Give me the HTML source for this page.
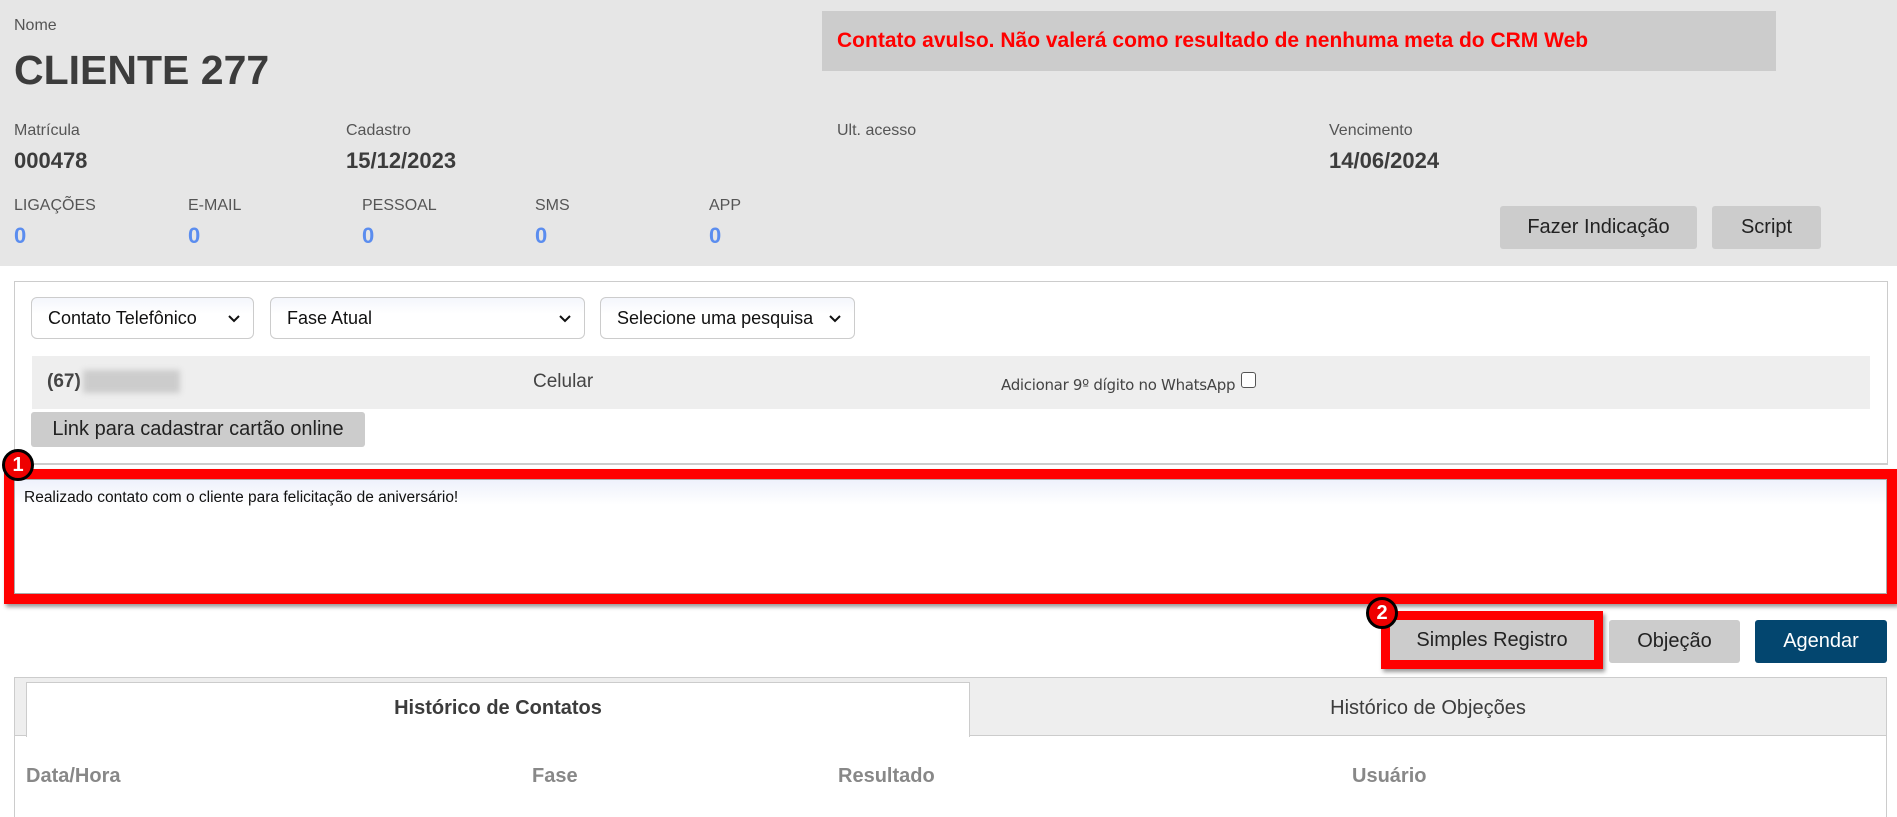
<!DOCTYPE html>
<html><head><meta charset="utf-8"><style>
*{box-sizing:border-box;margin:0;padding:0}
body{width:1897px;height:815px;overflow:hidden;background:#fff;font-family:"Liberation Sans",Arial,sans-serif;position:relative;color:#333}
.a{position:absolute;white-space:nowrap}
.hdr{position:absolute;left:0;top:0;width:1897px;height:266px;background:#e6e6e6}
.lbl{font-size:16px;color:#555}
.val{font-size:22px;font-weight:bold;color:#3c3c3c}
.cnt{font-size:22px;font-weight:bold;color:#5b8def}
.btn{position:absolute;background:#ccc;border-radius:3px;font-size:20px;color:#222;display:flex;align-items:center;justify-content:center}
.sel{position:absolute;top:297px;height:42px;border:1px solid #ccc;border-radius:6px;background:linear-gradient(#f4f6fc,#fff 40%);font-size:18px;color:#111;padding-left:16px;display:flex;align-items:center}
.sel svg{position:absolute;right:12px;top:16px}
.badge{position:absolute;width:32px;height:32px;border-radius:50%;background:#e00;border:3px solid #000;color:#fff;font-weight:bold;font-size:20px;display:flex;align-items:center;justify-content:center}
.th{position:absolute;top:765px;font-size:20px;font-weight:bold;color:#888}
</style></head><body>
<div class="hdr"></div>
<div class="a lbl" style="left:14px;top:17px">Nome</div>
<div class="a" style="left:14px;top:47px;font-size:41px;font-weight:bold;color:#3c3c3c">CLIENTE 277</div>
<div class="a" style="left:822px;top:11px;width:954px;height:60px;background:#ccc"></div>
<div class="a" style="left:837px;top:29px;font-size:21px;font-weight:bold;color:#f00">Contato avulso. Não valerá como resultado de nenhuma meta do CRM Web</div>

<div class="a lbl" style="left:14px;top:122px">Matrícula</div>
<div class="a val" style="left:14px;top:148px">000478</div>
<div class="a lbl" style="left:346px;top:122px">Cadastro</div>
<div class="a val" style="left:346px;top:148px">15/12/2023</div>
<div class="a lbl" style="left:837px;top:122px">Ult. acesso</div>
<div class="a lbl" style="left:1329px;top:122px">Vencimento</div>
<div class="a val" style="left:1329px;top:148px">14/06/2024</div>

<div class="a lbl" style="left:14px;top:197px">LIGAÇÕES</div>
<div class="a cnt" style="left:14px;top:223px">0</div>
<div class="a lbl" style="left:188px;top:197px">E-MAIL</div>
<div class="a cnt" style="left:188px;top:223px">0</div>
<div class="a lbl" style="left:362px;top:197px">PESSOAL</div>
<div class="a cnt" style="left:362px;top:223px">0</div>
<div class="a lbl" style="left:535px;top:197px">SMS</div>
<div class="a cnt" style="left:535px;top:223px">0</div>
<div class="a lbl" style="left:709px;top:197px">APP</div>
<div class="a cnt" style="left:709px;top:223px">0</div>

<div class="btn" style="left:1500px;top:206px;width:197px;height:43px">Fazer Indicação</div>
<div class="btn" style="left:1712px;top:206px;width:109px;height:43px">Script</div>

<div class="a" style="left:14px;top:281px;width:1874px;height:184px;border:1px solid #ccc;border-bottom-width:2px"></div>
<div class="sel" style="left:31px;width:223px">Contato Telefônico<svg width="14" height="10" viewBox="0 0 14 10"><path d="M2 2l5 5 5-5" stroke="#111" stroke-width="2" fill="none"/></svg></div>
<div class="sel" style="left:270px;width:315px">Fase Atual<svg width="14" height="10" viewBox="0 0 14 10"><path d="M2 2l5 5 5-5" stroke="#111" stroke-width="2" fill="none"/></svg></div>
<div class="sel" style="left:600px;width:255px">Selecione uma pesquisa<svg width="14" height="10" viewBox="0 0 14 10"><path d="M2 2l5 5 5-5" stroke="#111" stroke-width="2" fill="none"/></svg></div>

<div class="a" style="left:32px;top:356px;width:1838px;height:53px;background:#eee"></div>
<div class="a" style="left:47px;top:371px;font-size:19px;font-weight:bold;color:#444">(67)</div>
<div class="a" style="left:83px;top:370px;width:97px;height:23px;background:#ccc;filter:blur(3px)"></div>
<div class="a" style="left:533px;top:371px;font-size:19px;color:#444">Celular</div>
<div class="a" style="left:1001px;top:376px;font-size:15px;color:#444;font-family:'DejaVu Sans',sans-serif;letter-spacing:-0.3px">Adicionar 9º dígito no WhatsApp</div>
<div class="a" style="left:1241px;top:372px;width:15px;height:16px;border:1.5px solid #555;border-radius:3px;background:#fff"></div>

<div class="btn" style="left:31px;top:412px;width:334px;height:35px;font-size:20px">Link para cadastrar cartão online</div>

<div class="a" style="left:4px;top:469px;width:1893px;height:135px;border:10px solid #f00;box-shadow:2px 3px 4px rgba(0,0,0,.4)"></div>
<div class="a" style="left:14px;top:479px;width:1873px;height:115px;background:linear-gradient(#eef1fb,#fff 25px);border:1px solid #aaa"></div>
<div class="a" style="left:24px;top:489px;font-size:15.5px;color:#111">Realizado contato com o cliente para felicitação de aniversário!</div>
<div class="badge" style="left:2px;top:449px">1</div>

<div class="a" style="left:1381px;top:611px;width:222px;height:58px;border:9px solid #f00;box-shadow:2px 3px 4px rgba(0,0,0,.4)"></div>
<div class="btn" style="left:1390px;top:620px;width:204px;height:40px;border-radius:0;color:#222">Simples Registro</div>
<div class="badge" style="left:1366px;top:597px">2</div>
<div class="btn" style="left:1609px;top:620px;width:131px;height:43px">Objeção</div>
<div class="btn" style="left:1755px;top:620px;width:132px;height:43px;background:#03466f;color:#fff">Agendar</div>

<div class="a" style="left:14px;top:677px;width:1873px;height:140px;border:1px solid #ccc;border-bottom:none"></div>
<div class="a" style="left:15px;top:678px;width:1871px;height:58px;background:#eee;border-bottom:1px solid #ccc"></div>
<div class="a" style="left:26px;top:682px;width:944px;height:55px;background:#fff;border:1px solid #ccc;border-bottom:none"></div>
<div class="a" style="left:26px;top:697px;width:944px;text-align:center;font-size:20px;font-weight:bold;color:#3c3c3c">Histórico de Contatos</div>
<div class="a" style="left:970px;top:697px;width:916px;text-align:center;font-size:20px;color:#3c3c3c">Histórico de Objeções</div>

<div class="th" style="left:26px">Data/Hora</div>
<div class="th" style="left:532px">Fase</div>
<div class="th" style="left:838px">Resultado</div>
<div class="th" style="left:1352px">Usuário</div>
</body></html>
